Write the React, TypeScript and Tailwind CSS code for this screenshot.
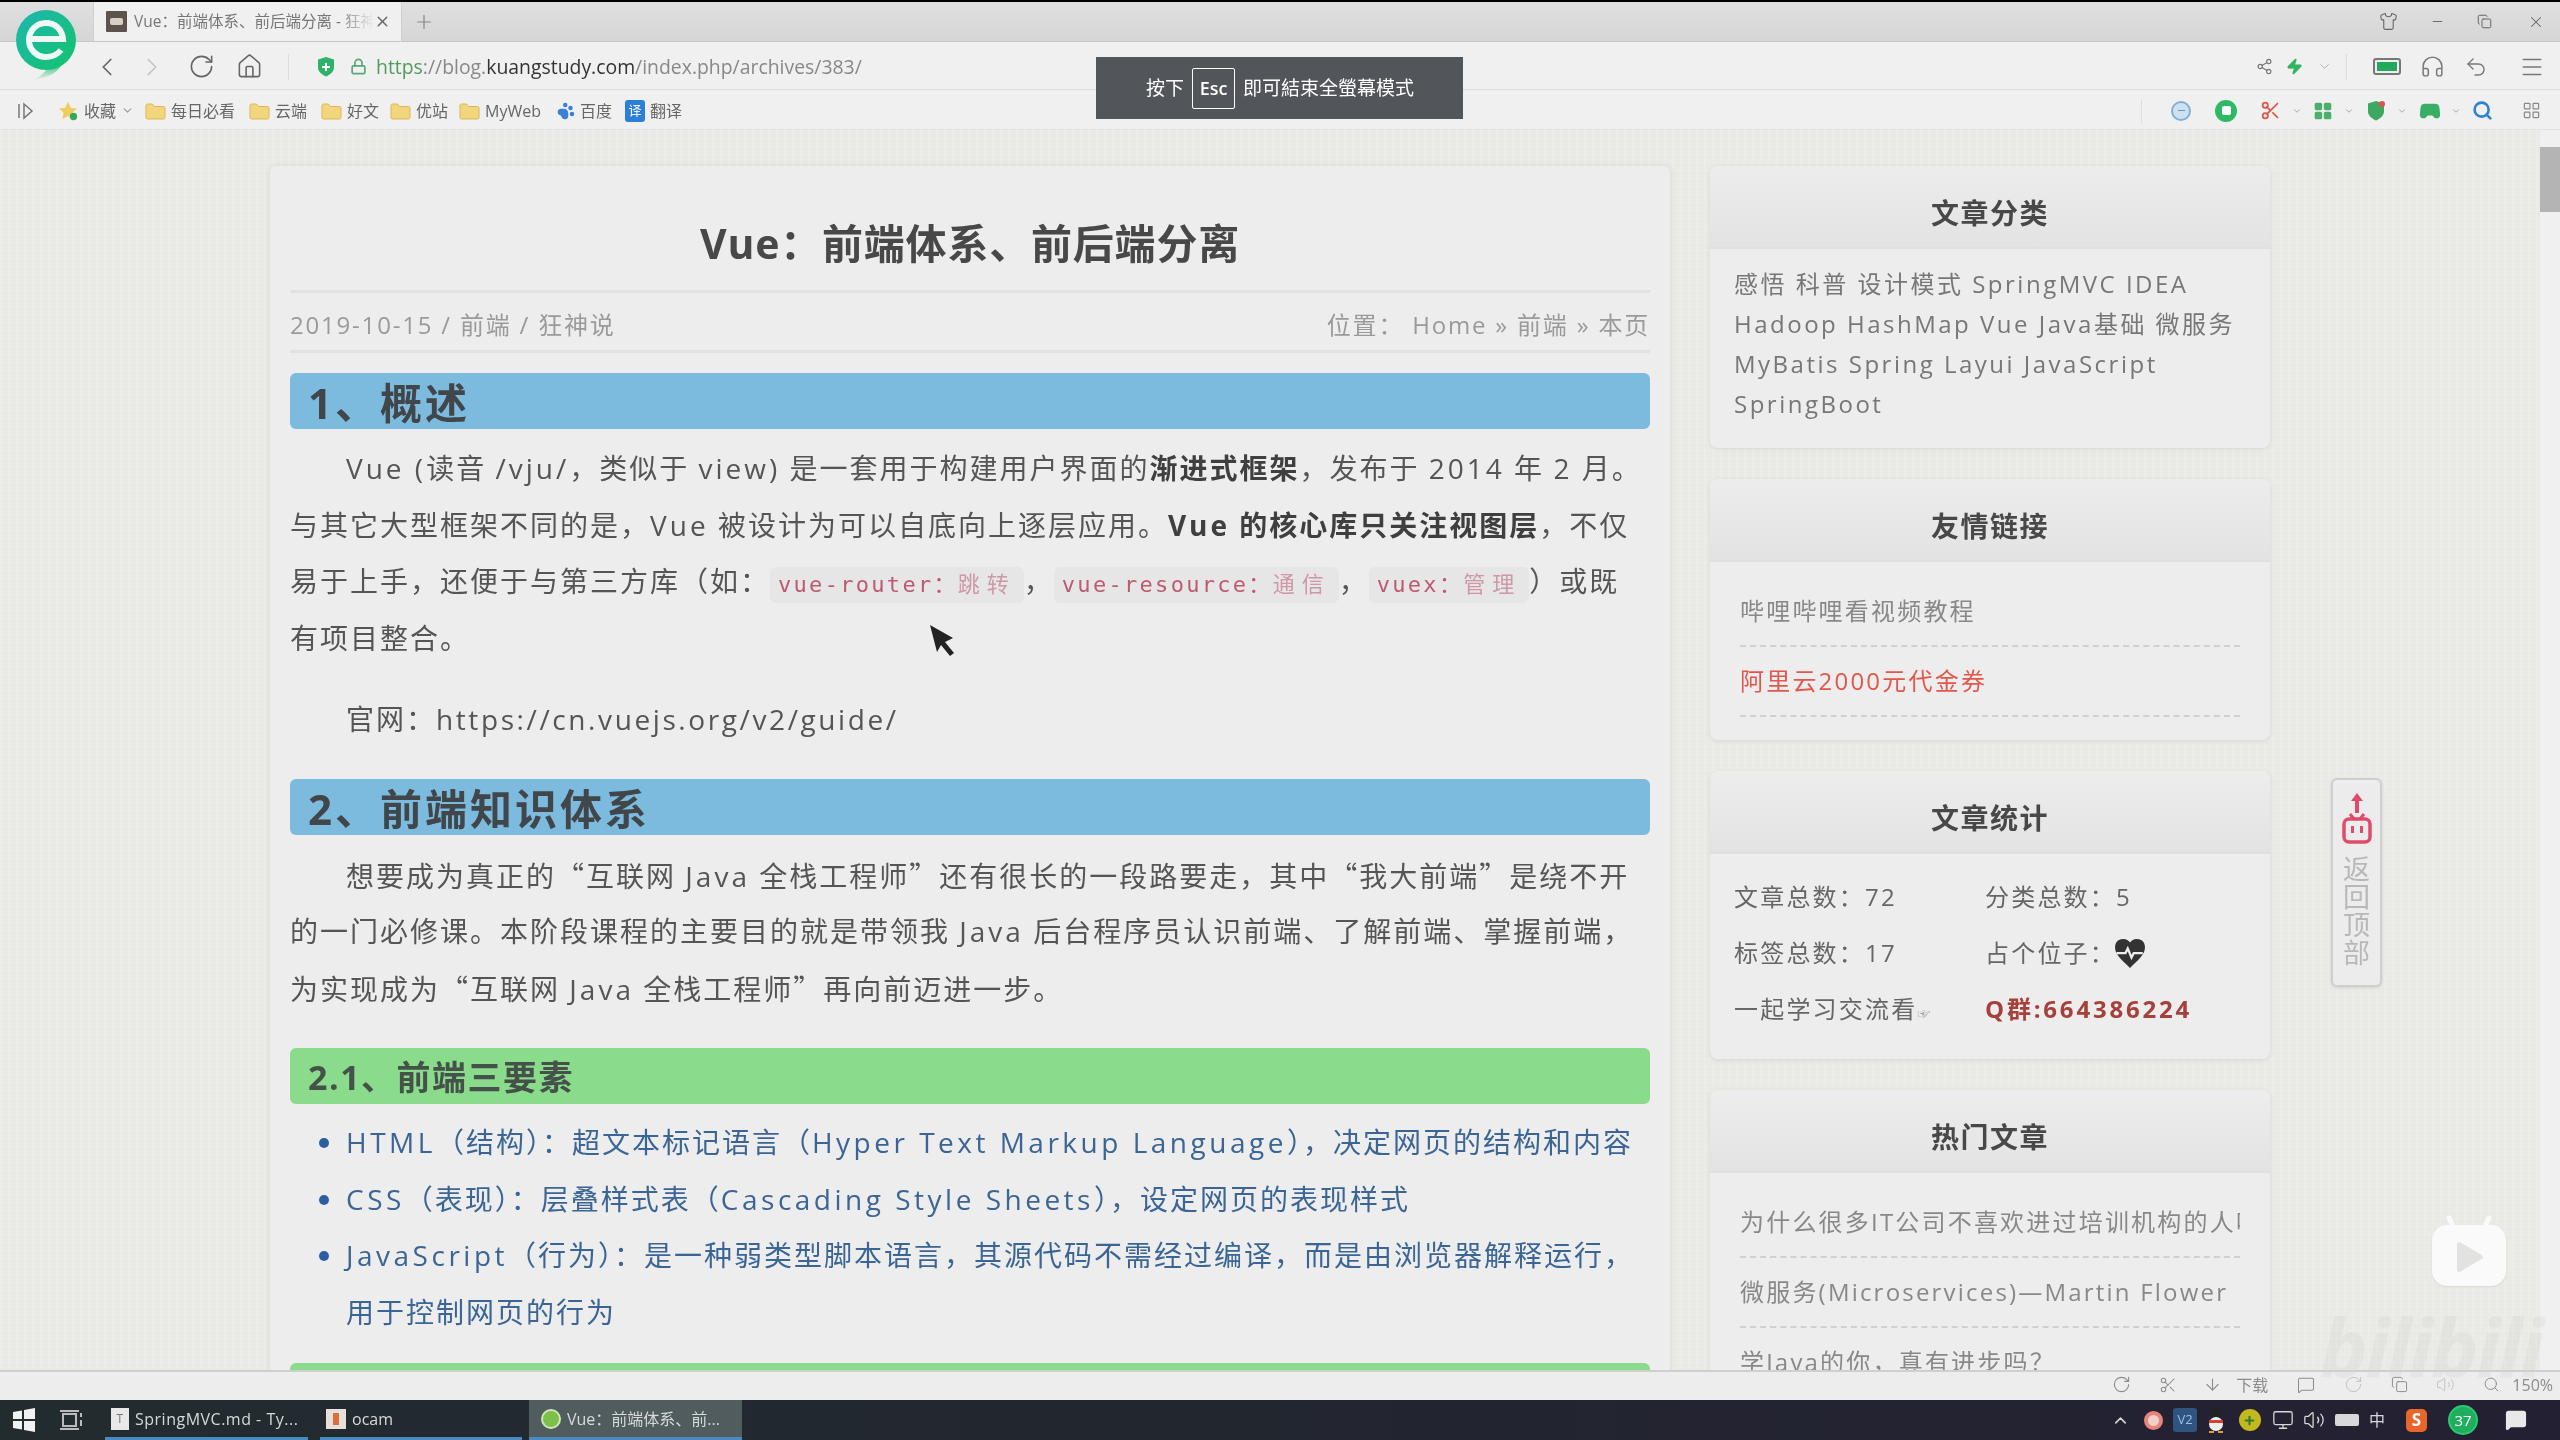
import type { ReactNode } from "react";
import {
  ArrowDown, ChevronDown, ChevronLeft, ChevronRight, ChevronUp, Copy, Gamepad2, Headphones, Home, LayoutGrid,
  Lock, Menu, MessageSquare, Minus, Monitor, PawPrint, Plus, RotateCw, Scissors, Search, Share2,
  Shirt, Undo2, Volume2, X, Zap,
} from "lucide-react";

function Folder() {
  return (
    <svg width="21" height="18" viewBox="0 0 21 18" className="shrink-0">
      <path d="M1 3.5C1 2.5 1.7 2 2.5 2h5l2 2.5h9c.8 0 1.5.6 1.5 1.5v9.5c0 .9-.7 1.5-1.500 1.500h-16C1.700 17 1 16.400 1 15.500z" fill="#f2d67d" stroke="#dcb75a" />
    </svg>
  );
}

function Mark({ name, className = "" }: { name: string; className?: string }) {
  return (
    <div className={`flex items-center gap-[5px] text-[16px] text-[#666] whitespace-nowrap ${className}`}>
      <Folder />
      {name}
    </div>
  );
}

function Logo() {
  return (
    <svg width="70" height="78" viewBox="0 0 70 78" className="absolute left-[11px] top-[6px] z-30">
      <defs>
        <linearGradient id="ring" x1="0" y1="0" x2="1" y2="1">
          <stop offset="0" stopColor="#1fb6b0" />
          <stop offset="1" stopColor="#12c46b" />
        </linearGradient>
        <linearGradient id="tail" x1="0" y1="0" x2="0" y2="1">
          <stop offset="0" stopColor="#18c070" />
          <stop offset="1" stopColor="#18c070" stopOpacity="0" />
        </linearGradient>
      </defs>
      <path d="M52 56 C48 66 38 72 22 74 C34 68 38 62 38 56z" fill="url(#tail)" />
      <circle cx="35" cy="34" r="30" fill="url(#ring)" />
      <path d="M18 33 H52 C51 23 44 17 35 17 C25 17 18 25 18 34 C18 44 26 51 35 51 C41 51 46 49 50 44" fill="none" stroke="#eef8f5" strokeWidth="6" />
    </svg>
  );
}

function Chrome() {
  return (
    <div className="shrink-0 relative">
      <div className="h-[2px] bg-black" />
      <div className="h-[40px] bg-gradient-to-b from-[#dfdfdf] to-[#d6d6d6] flex items-end border-b border-[#c8c8c8]">
        <div className="ml-[93px] w-[309px] h-[39px] bg-[#f0f0f0] flex items-center border-x border-[#cfcfcf]">
          <div className="ml-[12px] w-[21px] h-[21px] bg-[#5d534c] rounded-[1px] flex items-center justify-center">
            <div className="w-[13px] h-[7px] bg-[#d8d0c4] rounded-[2px]" />
          </div>
          <span className="ml-[7px] w-[240px] overflow-hidden whitespace-nowrap text-[15.500px] text-[#777] [mask-image:linear-gradient(90deg,#000_85%,transparent)]">Vue：前端体系、前后端分离 - 狂神说</span>
          <X size={17} className="text-[#666]" />
        </div>
        <Plus size={22} strokeWidth={1.3} className="ml-[11px] mb-[8px] text-[#888]" />
        <div className="ml-auto flex items-center h-full text-[#666]">
          <Shirt size={19} strokeWidth={1.4} className="mr-[32px]" />
          <Minus size={15} strokeWidth={1.5} className="mr-[32px]" />
          <Copy size={15} strokeWidth={1.6} className="mr-[35px]" />
          <X size={18} strokeWidth={1.4} className="mr-[15px]" />
        </div>
      </div>
      <div className="h-[48px] bg-[#f0f0f0] flex items-center pt-[2px] border-b border-[#dcdcdc]">
        <ChevronLeft size={30} strokeWidth={1.4} className="ml-[92px] text-[#666]" />
        <ChevronRight size={30} strokeWidth={1.4} className="ml-[15px] text-[#c4c4c4]" />
        <RotateCw size={27} strokeWidth={1.4} className="ml-[21px] text-[#666]" />
        <Home size={27} strokeWidth={1.4} className="ml-[21px] text-[#666]" />
        <div className="ml-[25px] w-px h-[26px] bg-[#ddd]" />
        <svg width="20" height="22" viewBox="0 0 20 22" className="ml-[27px]">
          <path d="M10 1l8 2.500v8c0 4-3.500 7-8 9-4.500-2-8-5-8-9v-8z" fill="#2eb267" />
          <path d="M10 7v8M6 11h8" stroke="#fff" strokeWidth="2" />
        </svg>
        <Lock size={17} strokeWidth={2.4} className="ml-[14px] text-[#58a878]" />
        <div className="ml-[9px] text-[19.400px] text-[#888] whitespace-nowrap">
          <span className="text-[#4f9a5c]">https</span>://blog.<span className="text-[#333]">kuangstudy.com</span>/index.php/archives/383/
        </div>
        <div className="ml-auto flex items-center text-[#777]">
          <Share2 size={17} strokeWidth={1.6} />
          <Zap size={17} fill="#31b561" className="ml-[13px] text-[#31b561]" />
          <ChevronDown size={15} strokeWidth={1.4} className="ml-[14px] text-[#aaa]" />
          <div className="ml-[14px] w-px h-[26px] bg-[#ddd]" />
          <div className="ml-[26px] w-[28px] h-[17px] border-2 border-[#777] rounded-[3px] p-[2px]">
            <div className="h-full bg-[#22a95b]" />
          </div>
          <Headphones size={25} strokeWidth={1.4} className="ml-[19px]" />
          <Undo2 size={24} strokeWidth={1.4} className="ml-[19px]" />
          <Menu size={26} strokeWidth={1.4} className="ml-[31px] mr-[15px]" />
        </div>
      </div>
      <div className="h-[40px] bg-[#f0f0f0] flex items-center pt-[2px] border-b border-[#e2e2e2]">
        <svg width="17" height="18" viewBox="0 0 17 18" className="ml-[17px]" fill="none" stroke="#777" strokeWidth="1.500">
          <path d="M2 2v14M7 2l8 7-8 7z" />
        </svg>
        <svg width="22" height="22" viewBox="0 0 24 24" className="ml-[23px]">
          <path d="M12 2l3 6.500 7 .8-5.200 4.700 1.400 7L12 17.500 5.800 21l1.400-7L2 9.300l7-.8z" fill="#f0cd63" />
          <circle cx="18" cy="18" r="4" fill="#3aa65a" />
        </svg>
        <span className="ml-[5px] text-[16px] text-[#666]">收藏</span>
        <ChevronDown size={13} className="ml-[5px] text-[#999]" />
        <Mark name="每日必看" className="ml-[11px]" />
        <Mark name="云端" className="ml-[14px]" />
        <Mark name="好文" className="ml-[14px]" />
        <Mark name="优站" className="ml-[11px]" />
        <Mark name="MyWeb" className="ml-[11px]" />
        <PawPrint size={18} fill="#3b7fd8" className="ml-[16px] text-[#3b7fd8]" />
        <span className="ml-[5px] text-[16px] text-[#666]">百度</span>
        <div className="ml-[13px] w-[20px] h-[22px] rounded-[3px] bg-[#2b7fd9] text-white text-[13px] flex items-center justify-center">译</div>
        <span className="ml-[5px] text-[16px] text-[#666]">翻译</span>
        <div className="ml-auto flex items-center">
          <div className="w-px h-[24px] bg-[#e0e0e0]" />
          <div className="ml-[29px] w-[20px] h-[20px] rounded-full border-2 border-[#7fb0d8] bg-[#cfe0ef] flex items-center justify-center"><Minus size={11} className="text-[#5a8fc0]" /></div>
          <div className="ml-[24px] w-[22px] h-[22px] rounded-full bg-[#2fb865] flex items-center justify-center"><div className="w-[9px] h-[9px] bg-white rounded-[2px]" /></div>
          <Scissors size={21} className="ml-[23px] text-[#e0524a]" />
          <ChevronDown size={10} className="ml-[11px] text-[#999]" />
          <LayoutGrid size={20} fill="#4caf6d" className="ml-[11px] text-[#4caf6d]" />
          <ChevronDown size={10} className="ml-[11px] text-[#999]" />
          <svg width="20" height="22" viewBox="0 0 20 22" className="ml-[12px]">
            <path d="M10 1l8 2.500v8c0 4-3.500 7-8 9-4.500-2-8-5-8-9v-8z" fill="#3da85f" />
            <circle cx="16" cy="4" r="3" fill="#e0524a" />
          </svg>
          <ChevronDown size={10} className="ml-[11px] text-[#999]" />
          <Gamepad2 size={22} fill="#39ae66" className="ml-[12px] text-[#39ae66]" />
          <ChevronDown size={10} className="ml-[10px] text-[#999]" />
          <Search size={21} strokeWidth={3} className="ml-[11px] text-[#2c83d6]" />
          <LayoutGrid size={19} strokeWidth={1.5} className="ml-[29px] mr-[19px] text-[#888]" />
        </div>
      </div>
      <Logo />
      <div className="absolute left-[1096px] top-[57px] z-30 w-[367px] h-[62px] bg-[#525559] flex items-center text-white text-[19px] pl-[50px]">
        按下
        <span className="mx-[8px] w-[43px] h-[41px] border border-white rounded-[2px] flex items-center justify-center text-[18px] font-semibold">Esc</span>
        即可結束全螢幕模式
      </div>
    </div>
  );
}

function Chip({ en, zh }: { en: string; zh: string }) {
  return (
    <span className="inline-block h-[36px] leading-[36px] rounded-[6px] bg-[#e6e6e6] px-[8px] text-[22px] tracking-[2.300px] text-[#bd5a70] font-['DejaVu_Sans_Mono','Noto_Sans_CJK_SC',monospace] align-middle">
      {en}：<span className="text-[#cf98a6] tracking-[7px]">{zh}</span>
    </span>
  );
}

function Line({ children, indent }: { children: ReactNode; indent?: boolean }) {
  return <div className={`h-[56.500px] leading-[56.500px] whitespace-nowrap ${indent ? "pl-[56px]" : ""}`}>{children}</div>;
}

function Q({ children }: { children: ReactNode }) {
  return <span className="font-['Noto_Sans_CJK_SC',sans-serif]">{children}</span>;
}

// latin runs are wider than the cjk around them in the reference
function En({ children }: { children: ReactNode }) {
  return <span className="tracking-[3px]">{children}</span>;
}

function Li({ children }: { children: ReactNode }) {
  return <span className="tracking-[3.500px]">{children}</span>;
}

function Article() {
  const b = "font-bold text-[#3f3f3f]";
  return (
    <div className="w-[1400px] h-[1300px] shrink-0 bg-[#ededed] rounded-[6px] shadow-[0_0_6px_rgba(0,0,0,0.08)] px-[20px] pt-[44px]">
      <h1 className="h-[66px] leading-[66px] text-center text-[41px] tracking-[0.800px] font-bold text-[#484848]">Vue：前端体系、前后端分离</h1>
      <div className="mt-[14px] border-y-[3px] border-[#e2e2e2] h-[63px] pt-[7px] flex items-center justify-between text-[24px] tracking-[1.800px] text-[#9a9a9a]">
        <span>2019-10-15 / 前端 / 狂神说</span>
        <span>位置： Home » 前端 » 本页</span>
      </div>
      <h2 className="mt-[20px] h-[56px] leading-[60px] bg-[#7cbbdd] rounded-[6px] pl-[18px] text-[42px] tracking-[3px] font-bold text-[#40464a]">1、概述</h2>
      <div className="mt-[11px] text-[28px] tracking-[2px] text-[#555]">
        <Line indent><En>Vue (</En>读音 <En>/vju/</En>，类似于 <En>view)</En> 是一套用于构建用户界面的<b className={b}>渐进式框架</b>，发布于 <En>2014</En> 年 <En>2</En> 月。</Line>
        <Line>与其它大型框架不同的是，<En>Vue</En> 被设计为可以自底向上逐层应用。<b className={b}><En>Vue</En> 的核心库只关注视图层</b>，不仅</Line>
        <Line>易于上手，还便于与第三方库（如：<Chip en="vue-router" zh="跳转" />，<Chip en="vue-resource" zh="通信" />，<Chip en="vuex" zh="管理" />）或既</Line>
        <Line>有项目整合。</Line>
        <div className="mt-[25px]"><Line indent>官网：<span className="tracking-[2.600px]">https://cn.vuejs.org/v2/guide/</span></Line></div>
      </div>
      <h2 className="mt-[31px] h-[56px] leading-[60px] bg-[#7cbbdd] rounded-[6px] pl-[18px] text-[42px] tracking-[3px] font-bold text-[#40464a]">2、前端知识体系</h2>
      <div className="mt-[12px] text-[28px] tracking-[2px] text-[#555]">
        <Line indent>想要成为真正的<Q>“</Q>互联网 <En>Java</En> 全栈工程师<Q>”</Q>还有很长的一段路要走，其中<Q>“</Q>我大前端<Q>”</Q>是绕不开</Line>
        <Line>的一门必修课。本阶段课程的主要目的就是带领我 <En>Java</En> 后台程序员认识前端、了解前端、掌握前端，</Line>
        <Line>为实现成为<Q>“</Q>互联网 <En>Java</En> 全栈工程师<Q>”</Q>再向前迈进一步。</Line>
      </div>
      <h3 className="mt-[32px] h-[56px] leading-[58px] bg-[#8bdb8c] rounded-[6px] pl-[18px] text-[34px] tracking-[1.500px] font-bold text-[#45524a]">2.1、前端三要素</h3>
      <ul className="mt-[10px] pl-[56px] list-disc marker:text-[#2c5f9e] text-[28px] tracking-[2px] text-[#3b6594]">
        <li><Line><Li>HTML</Li>（结构）：超文本标记语言（<Li>Hyper Text Markup Language</Li>），决定网页的结构和内容</Line></li>
        <li><Line><Li>CSS</Li>（表现）：层叠样式表（<Li>Cascading Style Sheets</Li>），设定网页的表现样式</Line></li>
        <li><Line><Li>JavaScript</Li>（行为）：是一种弱类型脚本语言，其源代码不需经过编译，而是由浏览器解释运行，</Line><Line>用于控制网页的行为</Line></li>
      </ul>
      <div className="mt-[23px] h-[56px] bg-[#8bdb8c] rounded-[6px]" />
    </div>
  );
}

function Card({ title, children, className = "" }: { title: string; children: ReactNode; className?: string }) {
  return (
    <div className={`bg-[#ededed] rounded-[8px] shadow-[0_1px_5px_rgba(0,0,0,0.08)] ${className}`}>
      <div className="h-[83px] pt-[12px] bg-gradient-to-b from-[#ededed] to-[#e3e3e3] border-b-2 border-[#e0e0e0] rounded-t-[8px] flex items-center justify-center text-[28px] tracking-[1.500px] font-bold text-[#484848]">
        {title}
      </div>
      {children}
    </div>
  );
}

function LinkRow({ text, red }: { text: string; red?: boolean }) {
  return (
    <div className={`h-[70px] border-b-2 border-dashed border-[#d0d0d0] flex items-center overflow-hidden whitespace-nowrap text-[24px] tracking-[2.200px] ${red ? "text-[#e2574c]" : "text-[#888]"}`}>
      {text}
    </div>
  );
}

function Stat({ left, right }: { left: ReactNode; right: ReactNode }) {
  return (
    <div className="h-[56px] flex items-center text-[24px] tracking-[2.200px] text-[#666]">
      <div className="w-[251px] whitespace-nowrap">{left}</div>
      <div className="flex items-center whitespace-nowrap">{right}</div>
    </div>
  );
}

function Sidebar() {
  return (
    <div className="ml-[40px] w-[560px] shrink-0 flex flex-col gap-[31px]">
      <Card title="文章分类" className="h-[282px]">
        <div className="px-[24px] pt-[15px] text-[24px] leading-[40px] tracking-[2.500px] text-[#777]">
          <div className="whitespace-nowrap">感悟 科普 设计模式 SpringMVC IDEA</div>
          <div className="whitespace-nowrap">Hadoop HashMap Vue Java基础 微服务</div>
          <div className="whitespace-nowrap">MyBatis Spring Layui JavaScript</div>
          <div>SpringBoot</div>
        </div>
      </Card>
      <Card title="友情链接" className="h-[261px]">
        <div className="mx-[30px]">
          <div className="pt-[15px]"><LinkRow text="哔哩哔哩看视频教程" /></div>
          <LinkRow text="阿里云2000元代金券" red />
        </div>
      </Card>
      <Card title="文章统计" className="h-[288px]">
        <div className="px-[24px] pt-[15px]">
          <Stat left="文章总数：72" right="分类总数：5" />
          <Stat left="标签总数：17" right={<>占个位子：
            <svg width="36" height="36" viewBox="0 0 24 24" className="ml-[-4px]">
              <path d="M12 22C6 16 2 13 2 8a5.500 5.500 0 0 1 10-3 5.500 5.500 0 0 1 10 3c0 5-4 8-10 14z" fill="#333" />
              <path d="M3 12h6l1.500-3 2.500 6 1.500-3h6" fill="none" stroke="#eee" strokeWidth="1.500" />
            </svg></>} />
          <Stat left={<>一起学习交流看<span className="text-[13px] text-[#999]">☞</span></>} right={<span className="font-bold tracking-[2.800px] text-[#a6403a]">Q群:664386224</span>} />
        </div>
      </Card>
      <Card title="热门文章" className="h-[400px]">
        <div className="mx-[30px] pt-[15px]">
          <LinkRow text="为什么很多IT公司不喜欢进过培训机构的人吗" />
          <LinkRow text="微服务(Microservices)—Martin Flower" />
          <LinkRow text="学Java的你，真有进步吗？" />
        </div>
      </Card>
    </div>
  );
}

function BackTop() {
  return (
    <div className="absolute left-[2331px] top-[648px] w-[51px] h-[209px] bg-[#ececec] border-2 border-[#cfcfcf] rounded-[6px] flex flex-col items-center pt-[12px] shadow-[0_1px_3px_rgba(0,0,0,0.1)]">
      <svg width="32" height="52" viewBox="0 0 32 52">
        <path d="M16 1l6 8h-4v12h-4V9h-4z" fill="#e04a6b" />
        <rect x="3" y="27" width="26" height="23" rx="5" fill="none" stroke="#e04a6b" strokeWidth="3.500" />
        <path d="M9 22l4 5M23 22l-4 5" stroke="#e04a6b" strokeWidth="3" />
        <rect x="10" y="34" width="3" height="7" fill="#e04a6b" />
        <rect x="19" y="34" width="3" height="7" fill="#e04a6b" />
      </svg>
      <div className="mt-[11px] text-[27px] leading-[28px] text-[#b8b8b8] flex flex-col items-center">
        <span>返</span><span>回</span><span>顶</span><span>部</span>
      </div>
    </div>
  );
}

function PlayBubble() {
  return (
    <div className="absolute left-[2432px] top-[1095px] w-[74px] h-[61px] bg-[#fafafa] rounded-[15px] shadow-[0_1px_2px_rgba(0,0,0,0.08)]">
      <svg width="74" height="72" viewBox="0 0 74 72" className="absolute left-0 top-[-11px]">
        <path d="M21 12l-4-8M53 12l4-8" stroke="#fafafa" strokeWidth="5" strokeLinecap="round" />
        <path d="M27 30l22 13-22 13z" fill="#e2e2e0" stroke="#e2e2e0" strokeWidth="4" strokeLinejoin="round" />
      </svg>
    </div>
  );
}

function StatusBar() {
  return (
    <div className="shrink-0 h-[30px] pb-[3px] bg-[#ededed] border-t-2 border-[#cfcfcf] flex items-center justify-end text-[#8c8c8c] pr-[7px] relative z-10">
      <RotateCw size={19} strokeWidth={1.4} />
      <Scissors size={18} strokeWidth={1.4} className="ml-[28px]" />
      <ArrowDown size={19} strokeWidth={1.4} className="ml-[26px]" />
      <span className="ml-[14px] text-[16px]">下载</span>
      <MessageSquare size={18} strokeWidth={1.4} className="ml-[29px]" />
      <RotateCw size={19} strokeWidth={1.200} className="ml-[29px] text-[#c0c0c0]" />
      <Copy size={17} strokeWidth={1.4} className="ml-[28px]" />
      <Volume2 size={19} strokeWidth={1.200} className="ml-[28px] text-[#c0c0c0]" />
      <Search size={17} strokeWidth={1.4} className="ml-[28px]" />
      <span className="ml-[12px] text-[16px]">150%</span>
    </div>
  );
}

function Task({ text, icon, active, className = "" }: { text: string; icon: ReactNode; active?: boolean; className?: string }) {
  return (
    <div className={`h-full flex items-center gap-[6px] border-b-[3px] border-[#4a8ac0] pl-[6px] whitespace-nowrap overflow-hidden text-[16px] text-[#d5dada] ${active ? "bg-[#515c5e]" : ""} ${className}`}>
      {icon}
      {text}
    </div>
  );
}

function Taskbar() {
  return (
    <div className="shrink-0 h-[40px] bg-gradient-to-r from-[#222c2f] via-[#22262f] to-[#242033] flex items-center relative z-10">
      <svg width="24" height="24" viewBox="0 0 24 24" className="ml-[12px] shrink-0">
        <path d="M1 4l9-1.500V11H1zM12 2l11-2v11H12zM1 13h9v8.500L1 20zM12 13h11v11l-11-2z" fill="#f2f2f2" />
      </svg>
      <svg width="24" height="24" viewBox="0 0 24 24" className="ml-[23px] shrink-0" fill="none" stroke="#bbb" strokeWidth="2">
        <rect x="4" y="6" width="13" height="12" />
        <path d="M1 3h19M1 21h19M22 5v4M22 12v6" />
      </svg>
      <div className="ml-[22px] h-full flex">
        <Task className="w-[203px] tracking-[0.500px]" text="SpringMVC.md - Ty..." icon={<div className="w-[18px] h-[22px] bg-[#e8e8e8] text-[#777] text-[12px] flex items-center justify-center shrink-0">T</div>} />
        <Task className="w-[202px] ml-[12px]" text="ocam" icon={<div className="w-[20px] h-[20px] bg-[#e8e0d8] shrink-0 flex items-center justify-center"><div className="w-[6px] h-[12px] bg-[#d9703a]" /></div>} />
        <Task className="w-[213px] ml-[7px] pl-[12px]" active text="Vue：前端体系、前..." icon={<div className="w-[20px] h-[20px] rounded-full bg-[#7cc04a] border-2 border-[#cfe6b8] shrink-0" />} />
      </div>
      <div className="ml-auto flex items-center text-[#d8d8d8] pr-[33px]">
        <ChevronUp size={19} />
        <div className="ml-[14px] w-[19px] h-[19px] rounded-full border-[4px] border-[#e8857a] bg-[#f0d0c8]" />
        <div className="ml-[10px] w-[24px] h-[24px] rounded-[3px] bg-[#2d5580] text-[#9cc0e0] text-[13px] flex items-center justify-center">V2</div>
        <svg width="18" height="26" viewBox="0 0 18 26" className="ml-[10px]">
          <ellipse cx="9" cy="9" rx="6" ry="8" fill="#222" />
          <ellipse cx="9" cy="17" rx="7" ry="7" fill="#eee" />
          <path d="M2 13h14v3H2z" fill="#d8402f" />
          <path d="M2 24h5v2H2zM11 24h5v2h-5z" fill="#e0a030" />
        </svg>
        <div className="ml-[14px] w-[22px] h-[22px] rounded-full bg-[#c4b820] flex items-center justify-center"><Plus size={13} strokeWidth={4} className="text-[#2e7d32]" /></div>
        <Monitor size={22} strokeWidth={1.4} className="ml-[11px]" />
        <Volume2 size={22} strokeWidth={1.4} className="ml-[9px]" />
        <div className="ml-[10px] w-[24px] h-[12px] bg-[#d8d8d8] rounded-[2px]" />
        <span className="ml-[10px] text-[16px]">中</span>
        <div className="ml-[21px] w-[21px] h-[23px] rounded-[5px] bg-[#e8662a] text-white text-[17px] font-bold flex items-center justify-center">S</div>
        <div className="ml-[21px] w-[30px] h-[30px] rounded-full bg-[#1fae5e] border-2 border-[#2cc873] text-white text-[15px] flex items-center justify-center">37</div>
        <MessageSquare size={22} fill="#e8e8e8" className="ml-[27px] text-[#e8e8e8]" />
      </div>
    </div>
  );
}

export default function App() {
  return (
    <div className="relative h-screen w-full overflow-hidden flex flex-col font-['Open_Sans','Noto_Sans_CJK_SC',sans-serif] bg-[#e9eae5] blur-[0.4px]">
      <Chrome />
      <main className="relative flex-1 min-h-0 overflow-hidden bg-[#e9eae5] bg-[linear-gradient(rgba(255,255,255,0.12)_1px,transparent_1px),linear-gradient(90deg,rgba(255,255,255,0.12)_1px,transparent_1px)] bg-[size:8px_8px]">
        <div className="flex items-start pl-[270px]">
          <div className="flex items-start pt-[36px]">
            <Article />
            <Sidebar />
          </div>
          <div className="ml-auto w-[20px] h-[1300px] bg-[#f0f0f0] shrink-0 pt-[17px]">
            <div className="h-[65px] bg-[#b4b4b4]" />
          </div>
        </div>
        <BackTop />
        <PlayBubble />
        <svg width="30" height="40" viewBox="0 0 30 40" className="absolute left-[928px] top-[493px]">
          <path d="M2 2l7 27 4-7 9 11 4-3-9-11 8-4z" fill="#222" />
        </svg>
      </main>
      <StatusBar />
      <Taskbar />
      <span className="absolute left-[2320px] top-[1286px] z-20 text-[80px] font-bold italic tracking-[-2px] text-[#cfcfcf]/25 pointer-events-none">bilibili</span>
    </div>
  );
}
